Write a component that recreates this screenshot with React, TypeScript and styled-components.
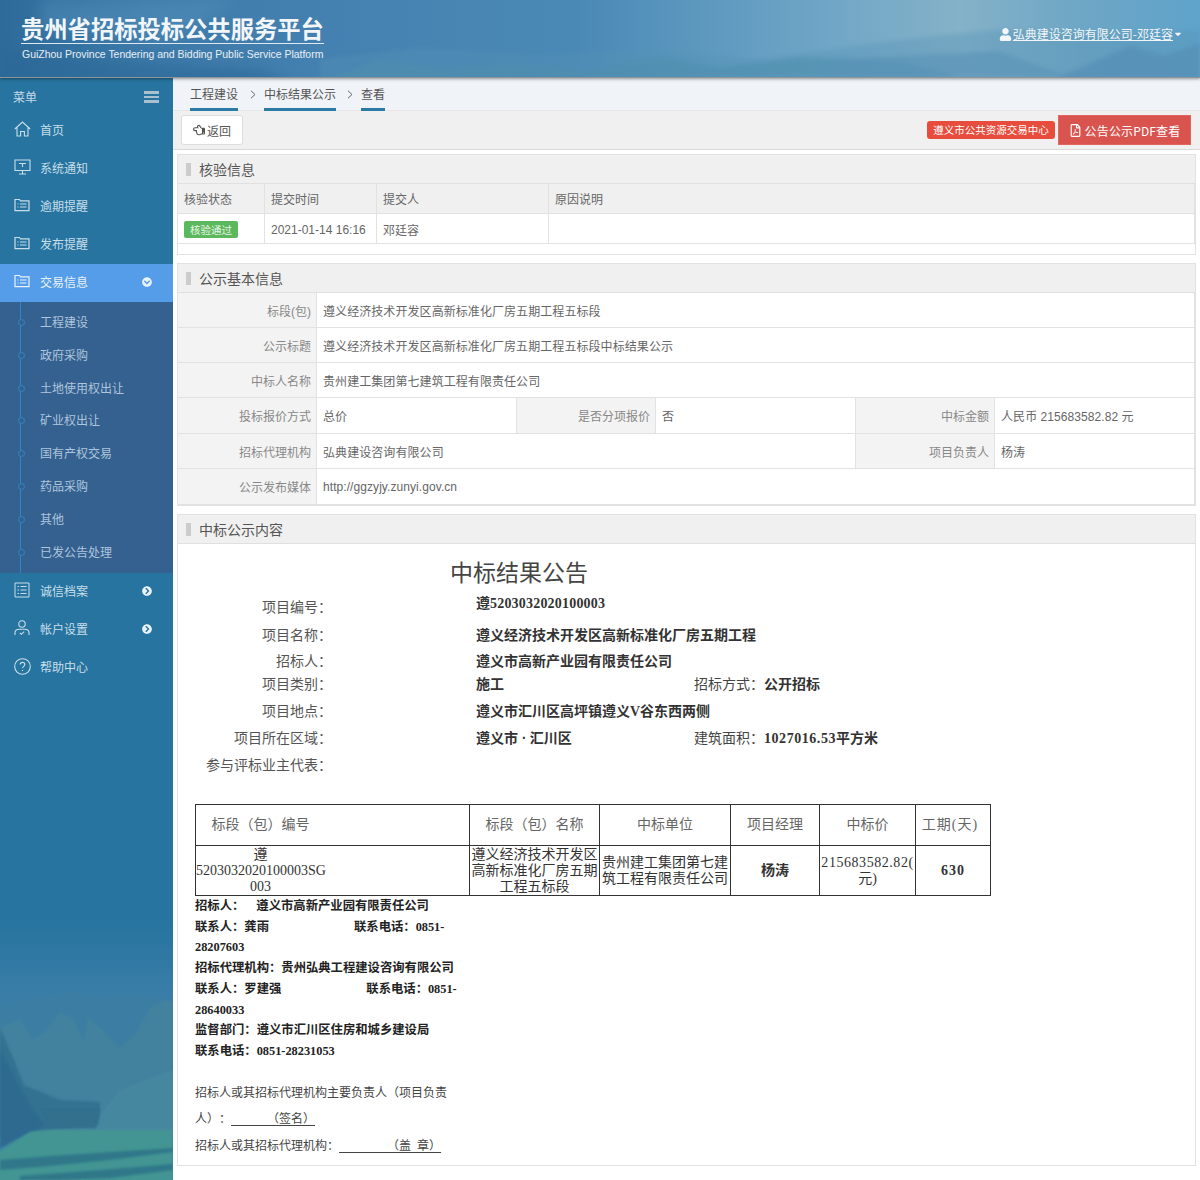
import React from 'react';
import styled, { createGlobalStyle } from 'styled-components';
import { FaChevronCircleDown, FaChevronCircleRight, FaRegFilePdf, FaUser, FaRegHandPointLeft, FaCaretDown } from 'react-icons/fa';

const Global = createGlobalStyle`
  html, body { margin: 0; padding: 0; background: #fff; }
  body { font-family: "Liberation Sans", "Noto Sans CJK SC", sans-serif; font-size: 12px; color: #666; text-spacing-trim: space-all; }
  * { box-sizing: border-box; }
`;

const Page = styled.div`
  width: 1200px; height: 1180px; overflow: hidden; display: flex; flex-direction: column; position: relative;
`;

const Header = styled.header`
  height: 78px; flex: none; position: relative; overflow: hidden; z-index: 2;
  background: linear-gradient(90deg, #2e6b9a 0%, #3d7aa9 12%, #4682b1 30%, #4a89b6 48%, #6ea5c6 68%, #84b2c8 80%, #6ea6c5 90%, #5fa3cb 100%);
  border-bottom: 1px solid #8d959a;
  box-shadow: 0 1px 3px rgba(0,0,0,.4);
  display: flex; justify-content: space-between; align-items: flex-start;
`;
const HeaderArt = styled.svg`
  position: absolute; inset: 0; width: 100%; height: 100%;
`;
const Brand = styled.div`
  position: relative; margin: 14px 0 0 21px; width: 303px;
`;
const BrandTitle = styled.div`
  font-family: "Noto Sans CJK SC", sans-serif; font-weight: 700; font-size: 23.3px; line-height: 29px; color: #f2f6f9; white-space: nowrap;
  border-bottom: 1px solid #dfe9f0; height: 30px;
`;
const BrandSub = styled.div`
  font-size: 10.46px; line-height: 13px; margin-top: 4px; color: #e8eff4; white-space: nowrap; margin-left: 1px;
`;
const UserLink = styled.div`
  position: relative; margin: 26px 17px 0 0; display: flex; align-items: center; color: #f2f6f9; font-size: 12px; line-height: 16px;
  font-family: "Noto Sans CJK SC", sans-serif;
  span { text-decoration: underline; margin-left: 1px; }
`;

const Body = styled.div`
  flex: 1; display: flex; min-height: 0;
`;
const Sidebar = styled.aside`
  width: 173px; flex: none; position: relative; overflow: hidden;
  background: #26749f;
`;
const SideArt = styled.svg`
  position: absolute; left: 0; bottom: 0; width: 173px; height: 260px;
`;
const SideInner = styled.div`
  position: relative;
`;
const MenuHead = styled.div`
  height: 34px; display: flex; align-items: center; justify-content: space-between; padding: 3px 14px 0 13px; color: #c6dbe8; font-size: 12px;
  font-family: "Noto Sans CJK SC", sans-serif;
`;
const BarsIcon = styled.span`
  width: 15px; height: 12px;
  background: repeating-linear-gradient(180deg, #a9c0cf 0 2.6px, transparent 2.6px 4.6px);
`;
const NavItem = styled.div<{ $active?: boolean }>`
  height: 38px; display: flex; align-items: center; padding: 0 0 4px 14px; color: ${p => p.$active ? '#e9f2fa' : '#c9deea'};
  background: ${p => p.$active ? '#559de8' : 'transparent'};
  font-size: 12px; position: relative; font-family: "Noto Sans CJK SC", sans-serif;
`;
const NavIconBox = styled.span`
  width: 26px; display: flex; justify-content: flex-start;
`;
const NavArrow = styled.span`
  position: absolute; left: 142px; top: 50%; transform: translateY(-50%); display: flex; color: #eaf3f9; margin-top: -1px;
`;
const Sub = styled.div`
  background: #356190; height: 271px; padding-top: 3px; position: relative;
`;
const SubLine = styled.i`
  position: absolute; left: 20px; top: 0; bottom: 0; width: 1px; background: #2f86c6;
`;
const SubItem = styled.div`
  height: 32.85px; padding-left: 40px; display: flex; align-items: center; color: #aec5dc; font-size: 12px; position: relative;
  font-family: "Noto Sans CJK SC", sans-serif;
  &::before { content: ""; position: absolute; left: 18px; top: 50%; margin-top: -2.5px; width: 5px; height: 5px; border-radius: 50%; background: #356190; border: 1px solid #2f86c6; }
`;

const Main = styled.main`
  flex: 1; min-width: 0; display: flex; flex-direction: column; background: #fff;
`;
const Crumbs = styled.nav`
  height: 33px; background: #f0f4f8; padding-left: 17px; display: flex; align-items: stretch; flex: none; border-bottom: 1px solid #e6e6e6;
`;
const Crumb = styled.div`
  height: 33px; border-bottom: 3px solid #2a7ca6; color: #555; font-size: 12px; display: flex; align-items: center;
  font-family: "Noto Sans CJK SC", sans-serif;
`;
const CrumbSep = styled.div<{ $w: number }>`
  width: ${p => p.$w}px; display: flex; align-items: center; justify-content: center; color: #666; padding-left: 3px;
`;
const Toolbar = styled.div`
  height: 39px; flex: none; background: #f0f0f0; border-bottom: 1px solid #d9d9d9; display: flex; align-items: center; justify-content: space-between; padding: 0 9px 0 8px;
`;
const BackBtn = styled.button`
  width: 62px; height: 30px; background: #fff; border: 1px solid #ddd; border-radius: 3px; color: #555; font: 12px "Noto Sans CJK SC", sans-serif; display: flex; align-items: center; justify-content: center; gap: 2px; padding: 0;
`;
const ToolRight = styled.div`
  display: flex; align-items: center; gap: 3px;
`;
const Badge = styled.span`
  height: 18px; width: 128px; background: #e74c3c; border-radius: 3px; color: #fff; font: 10.5px/18px "Noto Sans CJK SC", sans-serif; text-align: center; white-space: nowrap;
`;
const PdfBtn = styled.button`
  width: 133px; height: 30px; background: #d9534f; border: 1px solid #e0665f; color: #fff; font: 12px "Noto Sans CJK SC", sans-serif; display: flex; align-items: center; justify-content: center; gap: 3px; padding: 0;
  letter-spacing: 0.15px;
`;
const Panels = styled.div`
  padding: 4px 4px 0 4px; display: flex; flex-direction: column; gap: 8px;
`;
const Panel = styled.section`
  border: 1px solid #e2e2e2; background: #fff;
`;
const PanelHead = styled.div`
  height: 29px; background: #f0f0f0; border-bottom: 1px solid #e0e0e0; display: flex; align-items: center; padding-left: 8px; color: #555; font-size: 14px;
  font-family: "Noto Sans CJK SC", sans-serif;
  &::before { content: ""; width: 5px; height: 13px; background: #ccc; margin-right: 8px; }
`;
const CheckGrid = styled.div`
  display: grid; grid-template-columns: 87px 112px 172px 1fr; border-bottom: 1px solid #e2e2e2; margin-bottom: 10px; border-right: 1px solid #e2e2e2;
`;
const CheckCell = styled.div<{ $head?: boolean }>`
  height: ${p => p.$head ? 30 : 29}px; padding: ${p => p.$head ? '0 6px' : '2px 6px 0'}; display: flex; align-items: center; border-right: 1px solid #e2e2e2; white-space: nowrap;
  &:nth-child(4n) { border-right: 0; }
  background: ${p => p.$head ? '#f0f0f0' : '#fff'};
  border-bottom: ${p => p.$head ? '1px solid #e2e2e2' : '0'};
`;
const Tag = styled.span`
  width: 54px; height: 17px; background: #5cb85c; border-radius: 2px; color: #e7f5e7; font: 10.5px/17px "Noto Sans CJK SC", sans-serif; text-align: center;
`;
const InfoGrid = styled.div`
  display: grid; grid-template-columns: 139px 200px 139px 200px 139px 1fr;
`;
const InfoLabel = styled.div<{ $h?: number }>`
  height: ${p => p.$h ?? 35}px; background: #f3f3f3; border-bottom: 1px solid #e2e2e2; border-right: 1px solid #e2e2e2; display: flex; align-items: center; justify-content: flex-end; padding-right: 5px; white-space: nowrap;
  color: #888;
`;
const InfoValue = styled.div<{ $span?: number; $h?: number }>`
  height: ${p => p.$h ?? 35}px; grid-column: span ${p => p.$span ?? 1}; border-bottom: 1px solid #e2e2e2; border-right: 1px solid #e2e2e2; display: flex; align-items: center; padding-left: 6px; white-space: nowrap; color: #666; letter-spacing: 0.07px;
`;
const Doc = styled.div`
  font-family: "Liberation Serif", "Noto Sans CJK SC", serif; font-size: 14px; color: #333; padding: 16px 0 0 17px; height: 621px;
`;
const DocTitle = styled.div`
  height: 28px; padding-left: 255px; font-size: 23px; line-height: 28px; color: #444; margin-bottom: 5px;
`;
const DocRow = styled.div<{ $h: number }>`
  height: ${p => p.$h}px; display: flex; align-items: center; white-space: nowrap;
`;
const DocLabel = styled.div`
  width: 137px; text-align: right; color: #555; flex: none;
`;
const DocVal = styled.div<{ $lift?: boolean }>`
  font-weight: 700; margin-left: 144px; width: 218px; flex: none; color: #333;
  margin-bottom: ${p => p.$lift ? 8 : 0}px;
`;
const DocExtraLabel = styled.div`
  width: 70px; flex: none; color: #444;
`;
const DocExtraVal = styled.div`
  font-weight: 700; color: #333;
`;
const Num = styled.span<{ $ls?: number }>`
  letter-spacing: ${p => p.$ls ?? 0.2}px;
`;
const BidTable = styled.table`
  border-collapse: collapse; table-layout: fixed; width: 795px; margin-top: 25px; text-align: center; color: #333;
  td { border: 1px solid #333; padding: 0; line-height: 16px; overflow: hidden; white-space: nowrap; }
  thead td { height: 41px; color: #666; }
  tbody td { height: 50px; }
`;
const BidFirst = styled.td`
  && { padding-right: 144px; }
`;
const BidDays = styled.td`
  && { padding-right: 6px; }
  letter-spacing: 1px;
`;
const Notes = styled.div`
  font-weight: 700; font-size: 12.33px; line-height: 20.7px; color: #222; white-space: nowrap;
`;
const Gap = styled.span<{ $w: number }>`
  display: inline-block; width: ${p => p.$w}px;
`;
const Sign = styled.div`
  font-size: 12px; color: #444; margin-top: 18px; white-space: nowrap;
`;
const SignLine = styled.div`
  height: 26.5px; line-height: 26.5px;
  u { text-underline-offset: 2px; white-space: pre; }
`;

const FolderList = () => (
  <svg width="16" height="14" viewBox="0 0 16 14" fill="none" stroke="currentColor" strokeWidth="1.2">
    <path d="M1 12.6V1.500h4.500l1 1.300H15v9.800z" />
    <path d="M3.500 6h1M6 6h6.500M3.500 9h1M6 9h6.500" />
  </svg>
);
const HomeIcon = () => (
  <svg width="17" height="16" viewBox="0 0 17 16" fill="none" stroke="currentColor" strokeWidth="1.1">
    <path d="M.8 8 8.500 1l7.700 7M3 6.500V15h3.600v-4.500h3.800V15H14V6.500" />
  </svg>
);
const MonitorIcon = () => (
  <svg width="17" height="16" viewBox="0 0 17 16" fill="none" stroke="currentColor" strokeWidth="1.1">
    <path d="M1 1h15v10.500H1zM8.500 11.500V15M5 15h7M5 4.500h7M8.500 4.500V8" />
  </svg>
);
const ListIcon = () => (
  <svg width="16" height="16" viewBox="0 0 16 16" fill="none" stroke="currentColor" strokeWidth="1">
    <path d="M1 1h14v14H1zM3.500 4.500h1.500M6.500 4.500h6M3.500 8h1.500M6.500 8h6M3.500 11.500h1.500M6.500 11.500h6" />
  </svg>
);
const UserCheckIcon = () => (
  <svg width="16" height="16" viewBox="0 0 16 16" fill="none" stroke="currentColor" strokeWidth="1.1">
    <circle cx="8" cy="4" r="3.200" />
    <path d="M1 15v-2.200C1 10.500 3 9.300 5.500 9.300h5c2.500 0 4.500 1.200 4.500 3.500V15M5.800 12.800l1.600 1.500 2.800-2.600" />
  </svg>
);
const HelpIcon = () => (
  <svg width="17" height="17" viewBox="0 0 17 17" fill="none" stroke="currentColor" strokeWidth="1.1">
    <circle cx="8.500" cy="8.500" r="7.800" />
    <path d="M6.200 6.600c0-1.400 1-2.200 2.300-2.200s2.300.9 2.300 2c0 1.900-2.300 1.900-2.300 3.800" />
    <path d="M8.500 12v1" />
  </svg>
);
const Angle = () => (
  <svg width="6" height="9" viewBox="0 0 6 9" fill="none" stroke="currentColor" strokeWidth="1">
    <path d="M1 .8 5 4.500 1 8.200" />
  </svg>
);

const navTop: [string, React.ReactNode][] = [
  ['首页', <HomeIcon />],
  ['系统通知', <MonitorIcon />],
  ['逾期提醒', <FolderList />],
  ['发布提醒', <FolderList />],
];
const subs = ['工程建设', '政府采购', '土地使用权出让', '矿业权出让', '国有产权交易', '药品采购', '其他', '已发公告处理'];

export default function App() {
  return (
    <Page>
      <Global />
      <Header>
        <HeaderArt viewBox="0 0 1200 78" preserveAspectRatio="none">
          <defs>
            <filter id="hb" x="-10%" y="-50%" width="120%" height="200%"><feGaussianBlur stdDeviation="7" /></filter>
            <filter id="hs" x="-10%" y="-50%" width="120%" height="200%"><feGaussianBlur stdDeviation="2" /></filter>
          </defs>
          <path d="M0 50 120 62 260 70 300 90H0z" fill="#2a6796" opacity=".6" filter="url(#hb)" />
          <path d="M40 0H240L170 40 40 30z" fill="#5d99c2" opacity=".35" filter="url(#hb)" />
          <path d="M320 60 420 48 540 55 660 50 760 60 900 40 1000 30 1100 34 1200 30V90H320z" fill="#5793b6" opacity=".35" filter="url(#hs)" />
          <path d="M330 80 380 60 440 70 520 64 590 72 660 58 720 68 800 58 900 62 960 78z" fill="#4f8fae" opacity=".6" filter="url(#hs)" />
          <path d="M1060 78 1130 46 1165 56 1200 44V80H1060z" fill="#578fb6" opacity=".75" filter="url(#hs)" />
          <path d="M840 60 1000 52 1070 78H820z" fill="#5a93b8" opacity=".6" filter="url(#hs)" />
        </HeaderArt>
        <Brand>
          <BrandTitle>贵州省招标投标公共服务平台</BrandTitle>
          <BrandSub>GuiZhou Province Tendering and Bidding Public Service Platform</BrandSub>
        </Brand>
        <UserLink>
          <FaUser size={13} />
          <span>弘典建设咨询有限公司-邓廷容</span>
          <FaCaretDown size={10} />
        </UserLink>
      </Header>
      <Body>
        <Sidebar>
          <SideArt viewBox="0 0 173 260" preserveAspectRatio="none">
            <defs>
              <linearGradient id="sideSky" x1="0" y1="0" x2="0" y2="1">
                <stop offset="0" stopColor="#26749f" />
                <stop offset=".3" stopColor="#3a7ea8" />
                <stop offset="1" stopColor="#3e80a6" />
              </linearGradient>
              <filter id="sb" x="-5%" y="-5%" width="110%" height="110%"><feGaussianBlur stdDeviation="1" /></filter>
            </defs>
            <rect width="173" height="260" fill="url(#sideSky)" />
            <path d="M0 85 30 78 70 72 110 76 130 72 173 80V200H0z" fill="#3c7ea2" opacity=".7" filter="url(#sb)" />
            <path d="M0 108 10 104 20 100 33 120 45 112 60 93 72 98 84 122 88 98 100 108 120 128 135 115 150 88 165 80 173 82V215H0z" fill="#43829e" filter="url(#sb)" />
            <path d="M0 108 14 140 24 165 60 180 100 182 100 205 0 215z" fill="#32708f" opacity=".85" filter="url(#sb)" />
            <path d="M0 130 30 185 45 205 0 228z" fill="#2e6a8f" filter="url(#sb)" />
            <path d="M40 188H100L96 208H50z" fill="#306f8d" filter="url(#sb)" />
            <path d="M100 196 120 170 173 150V212H96z" fill="#4a8aa2" opacity=".7" filter="url(#sb)" />
            <path d="M30 212 50 210H173V262H-2V232z" fill="#439592" filter="url(#sb)" />
            <path d="M0 240 50 236 110 232 173 228V232L110 240 50 246 0 250zM20 256 100 250 173 244V250L110 258 60 260H20z" fill="#2c6e88" opacity=".75" filter="url(#sb)" />
          </SideArt>
          <SideInner>
            <MenuHead>菜单<BarsIcon /></MenuHead>
            {navTop.map(([t, i]) => (
              <NavItem key={t}><NavIconBox>{i}</NavIconBox>{t}</NavItem>
            ))}
            <NavItem $active>
              <NavIconBox><FolderList /></NavIconBox>交易信息
              <NavArrow><FaChevronCircleDown size={10} /></NavArrow>
            </NavItem>
            <Sub>
              <SubLine />
              {subs.map(s => <SubItem key={s}>{s}</SubItem>)}
            </Sub>
            <NavItem><NavIconBox><ListIcon /></NavIconBox>诚信档案<NavArrow><FaChevronCircleRight size={10} /></NavArrow></NavItem>
            <NavItem><NavIconBox><UserCheckIcon /></NavIconBox>帐户设置<NavArrow><FaChevronCircleRight size={10} /></NavArrow></NavItem>
            <NavItem><NavIconBox><HelpIcon /></NavIconBox>帮助中心</NavItem>
          </SideInner>
        </Sidebar>
        <Main>
          <Crumbs>
            <Crumb>工程建设</Crumb>
            <CrumbSep $w={26}><Angle /></CrumbSep>
            <Crumb>中标结果公示</Crumb>
            <CrumbSep $w={25}><Angle /></CrumbSep>
            <Crumb>查看</Crumb>
          </Crumbs>
          <Toolbar>
            <BackBtn><FaRegHandPointLeft size={12} />返回</BackBtn>
            <ToolRight>
              <Badge>遵义市公共资源交易中心</Badge>
              <PdfBtn><FaRegFilePdf size={13} />公告公示PDF查看</PdfBtn>
            </ToolRight>
          </Toolbar>
          <Panels>
            <Panel>
              <PanelHead>核验信息</PanelHead>
              <CheckGrid>
                <CheckCell $head>核验状态</CheckCell>
                <CheckCell $head>提交时间</CheckCell>
                <CheckCell $head>提交人</CheckCell>
                <CheckCell $head>原因说明</CheckCell>
                <CheckCell><Tag>核验通过</Tag></CheckCell>
                <CheckCell>2021-01-14 16:16</CheckCell>
                <CheckCell>邓廷容</CheckCell>
                <CheckCell />
              </CheckGrid>
            </Panel>
            <Panel>
              <PanelHead>公示基本信息</PanelHead>
              <InfoGrid>
                <InfoLabel>标段(包)</InfoLabel><InfoValue $span={5}>遵义经济技术开发区高新标准化厂房五期工程五标段</InfoValue>
                <InfoLabel>公示标题</InfoLabel><InfoValue $span={5}>遵义经济技术开发区高新标准化厂房五期工程五标段中标结果公示</InfoValue>
                <InfoLabel>中标人名称</InfoLabel><InfoValue $span={5}>贵州建工集团第七建筑工程有限责任公司</InfoValue>
                <InfoLabel $h={36}>投标报价方式</InfoLabel><InfoValue $h={36}>总价</InfoValue>
                <InfoLabel $h={36}>是否分项报价</InfoLabel><InfoValue $h={36}>否</InfoValue>
                <InfoLabel $h={36}>中标金额</InfoLabel><InfoValue $h={36}>人民币 215683582.82 元</InfoValue>
                <InfoLabel>招标代理机构</InfoLabel><InfoValue $span={3}>弘典建设咨询有限公司</InfoValue>
                <InfoLabel>项目负责人</InfoLabel><InfoValue>杨涛</InfoValue>
                <InfoLabel $h={36}>公示发布媒体</InfoLabel><InfoValue $span={5} $h={36}>http://ggzyjy.zunyi.gov.cn</InfoValue>
              </InfoGrid>
            </Panel>
            <Panel>
              <PanelHead>中标公示内容</PanelHead>
              <Doc>
                <DocTitle>中标结果公告</DocTitle>
                <DocRow $h={26}><DocLabel>项目编号：</DocLabel><DocVal $lift>遵<Num>5203032020100003</Num></DocVal></DocRow>
                <DocRow $h={30}><DocLabel>项目名称：</DocLabel><DocVal>遵义经济技术开发区高新标准化厂房五期工程</DocVal></DocRow>
                <DocRow $h={22}><DocLabel>招标人：</DocLabel><DocVal>遵义市高新产业园有限责任公司</DocVal></DocRow>
                <DocRow $h={24}><DocLabel>项目类别：</DocLabel><DocVal>施工</DocVal><DocExtraLabel>招标方式：</DocExtraLabel><DocExtraVal>公开招标</DocExtraVal></DocRow>
                <DocRow $h={30}><DocLabel>项目地点：</DocLabel><DocVal>遵义市汇川区高坪镇遵义V谷东西两侧</DocVal></DocRow>
                <DocRow $h={24}><DocLabel>项目所在区域：</DocLabel><DocVal>遵义市 · 汇川区</DocVal><DocExtraLabel>建筑面积：</DocExtraLabel><DocExtraVal><Num $ls={0.55}>1027016.53</Num>平方米</DocExtraVal></DocRow>
                <DocRow $h={30}><DocLabel>参与评标业主代表：</DocLabel></DocRow>
                <BidTable>
                  <colgroup>
                    <col width="274" /><col width="130" /><col width="131" /><col width="89" /><col width="96" /><col width="75" />
                  </colgroup>
                  <thead>
                    <tr><BidFirst>标段（包）编号</BidFirst><td>标段（包）名称</td><td>中标单位</td><td>项目经理</td><td>中标价</td><BidDays>工期(天)</BidDays></tr>
                  </thead>
                  <tbody>
                    <tr>
                      <BidFirst>遵<br /><Num $ls={0}>5203032020100003SG</Num><br />003</BidFirst>
                      <td>遵义经济技术开发区<br />高新标准化厂房五期<br />工程五标段</td>
                      <td>贵州建工集团第七建<br />筑工程有限责任公司</td>
                      <td><b>杨涛</b></td>
                      <td><Num $ls={0.55}>215683582.82(</Num><br />元)</td>
                      <td><Num $ls={1}><b>630</b></Num></td>
                    </tr>
                  </tbody>
                </BidTable>
                <Notes>
                  <div>招标人：<Gap $w={12} />遵义市高新产业园有限责任公司</div>
                  <div>联系人：龚雨<Gap $w={85} />联系电话：0851-</div>
                  <div>28207603</div>
                  <div>招标代理机构：贵州弘典工程建设咨询有限公司</div>
                  <div>联系人：罗建强<Gap $w={85} />联系电话：0851-</div>
                  <div>28640033</div>
                  <div>监督部门：遵义市汇川区住房和城乡建设局</div>
                  <div>联系电话：0851-28231053</div>
                </Notes>
                <Sign>
                  <SignLine>招标人或其招标代理机构主要负责人（项目负责</SignLine>
                  <SignLine>人）：<u>{'            （签名）'}</u></SignLine>
                  <SignLine>招标人或其招标代理机构：<u>{'                （盖  章）'}</u></SignLine>
                </Sign>
              </Doc>
            </Panel>
          </Panels>
        </Main>
      </Body>
    </Page>
  );
}
